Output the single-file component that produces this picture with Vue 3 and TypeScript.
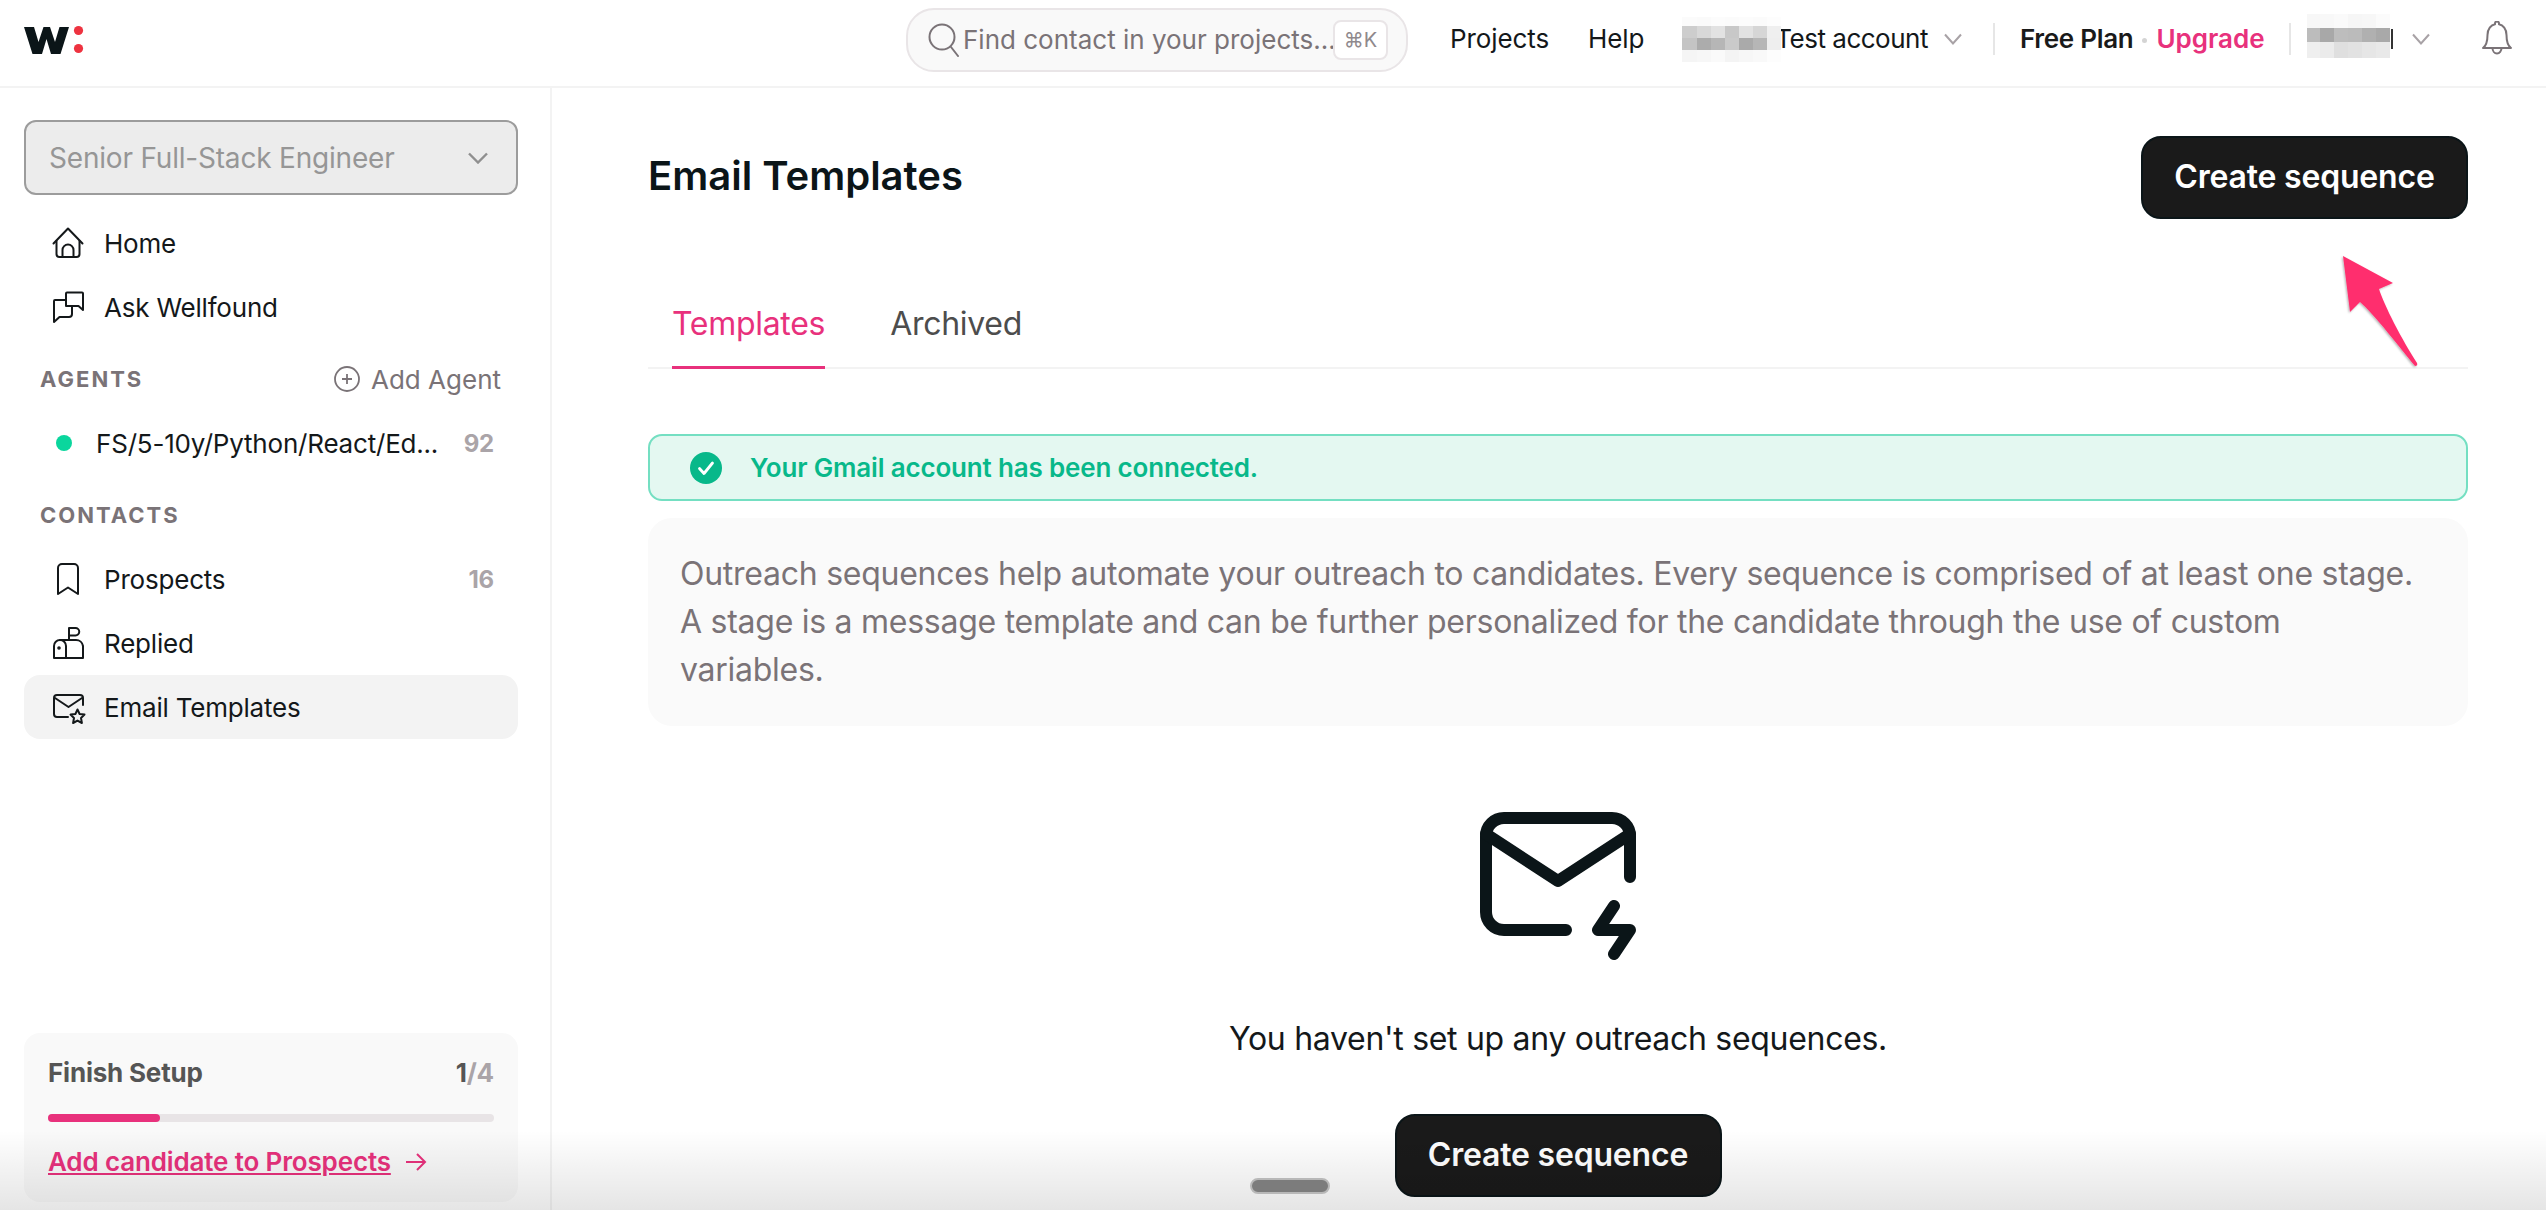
<script setup lang="ts">
// 打码区域的色块
const blurA: string[] = [
  '#fbfbfb', '#fafafa', '#fcfcfc', '#fbfbfb', '#fcfcfc', '#fbfbfb', '#fdfdfd',
  '#cdcdcd', '#d8d8d8', '#e2e2e2', '#c8c8c8', '#e2e2e2', '#d6d6d6', '#efefef',
  '#c4c4c4', '#acacac', '#b6b6b6', '#cacaca', '#aaaaaa', '#b6b6b6', '#eeeeee',
  '#f5f5f5', '#f7f7f7', '#fafafa', '#f4f4f4', '#f7f7f7', '#f9f9f9', '#fdfdfd'
]
const blurB: string[] = [
  '#f7f7f7', '#f8f8f8', '#fafafa', '#f6f6f6', '#f7f7f7', '#fbfbfb',
  '#bcbcbc', '#a8a8a8', '#bdbdbd', '#bbbbbb', '#b0b0b0', '#a9a9a9',
  '#efefef', '#ebebeb', '#dfdfdf', '#e2e2e2', '#e6e6e6', '#e9e9e9'
]
</script>

<template>
  <div class="page">
    <header class="topbar">
      <svg class="logo" width="62" height="30" viewBox="0 0 62 30">
        <polygon points="0,3 10,3 14.5,18 19.5,3 26,3 31,18 35.5,3 45,3 36.5,30 27,30 22.5,15 18,30 8.5,30" fill="#0b1518" />
        <circle cx="54.5" cy="6.5" r="4.6" fill="#ee3340" />
        <circle cx="54.5" cy="24.5" r="4.6" fill="#ee3340" />
      </svg>

      <div class="search">
        <svg width="34" height="34" viewBox="0 0 34 34" fill="none" stroke="#7a7377" stroke-width="2">
          <circle cx="15" cy="14" r="12.5" />
          <path d="M24 24 L31 33" stroke-linecap="round" />
        </svg>
        <span class="search-text">Find contact in your projects...</span>
        <span class="kbd">⌘K</span>
      </div>

      <span class="top-link projects">Projects</span>
      <span class="top-link help">Help</span>

      <div class="account">
        <div class="blur blur-a">
          <i v-for="(c, i) in blurA" :key="i" :style="{ background: c }"></i>
        </div>
        <span class="top-link test">Test account</span>
      </div>
      <svg class="chev" width="18" height="12" viewBox="0 0 18 12" fill="none" stroke="#a8a2a6" stroke-width="2">
        <path d="M1 1.5 L9 10.5 L17 1.5" />
      </svg>

      <span class="divider d1"></span>
      <span class="plan">Free Plan</span>
      <span class="plan-dot"></span>
      <span class="upgrade">Upgrade</span>
      <span class="divider d2"></span>

      <div class="blur blur-b">
        <i v-for="(c, i) in blurB" :key="i" :style="{ background: c }"></i>
      </div>
      <span class="sliver"></span>
      <svg class="chev chev2" width="18" height="12" viewBox="0 0 18 12" fill="none" stroke="#a8a2a6" stroke-width="2">
        <path d="M1 1.5 L9 10.5 L17 1.5" />
      </svg>

      <svg class="bell" width="32" height="36" viewBox="0 0 32 36" fill="none" stroke="#7a7377" stroke-width="2" stroke-linejoin="round">
        <path d="M2 27 C6 24 6.5 20 6.5 14 C6.5 8 10 4 14 3.2 V2.5 a2 2 0 0 1 4 0 V3.2 C22 4 25.5 8 25.5 14 C25.5 20 26 24 30 27 Z" />
        <path d="M11.5 27 a4.5 5.5 0 0 0 9 0" />
      </svg>
    </header>

    <div class="body">
      <aside class="sidebar">
        <div class="select">
          <span>Senior Full-Stack Engineer</span>
          <svg width="20" height="12" viewBox="0 0 20 12" fill="none" stroke="#8f8f8f" stroke-width="2.4">
            <path d="M1 1.5 L10 10.5 L19 1.5" />
          </svg>
        </div>

        <nav class="nav first">
          <div class="nav-row">
            <svg class="ico" viewBox="0 0 32 32">
              <path d="M1.5 16.5 L16 1.5 L30.5 16.5" />
              <path d="M4.5 14 V27 a3 3 0 0 0 3 3 H24.5 a3 3 0 0 0 3 -3 V14" />
              <path d="M10.5 30 V23 a5.5 5.5 0 0 1 11 0 V30" />
            </svg>
            <span>Home</span>
          </div>
          <div class="nav-row">
            <svg class="ico" viewBox="0 0 32 32">
              <path d="M14 9 V2.5 a1 1 0 0 1 1 -1 H30 a1 1 0 0 1 1 1 V19 L26.5 15 H20" />
              <path d="M14 9 H3 a1 1 0 0 0 -1 1 V31 L7.5 26 H17 a3 3 0 0 0 3 -3 V15 H14 V9" />
            </svg>
            <span>Ask Wellfound</span>
          </div>
        </nav>

        <div class="section-head">
          <span class="section-title">AGENTS</span>
          <span class="add-agent">
            <svg width="26" height="26" viewBox="0 0 26 26" fill="none" stroke="#7a7377" stroke-width="1.8">
              <circle cx="13" cy="13" r="12" />
              <path d="M13 8 V18 M8 13 H18" />
            </svg>
            Add Agent
          </span>
        </div>

        <nav class="nav">
          <div class="nav-row agent">
            <span class="dot"></span>
            <span class="agent-name">FS/5-10y/Python/React/Ed...</span>
            <span class="count">92</span>
          </div>
        </nav>

        <div class="section-head">
          <span class="section-title">CONTACTS</span>
        </div>

        <nav class="nav">
          <div class="nav-row">
            <svg class="ico" viewBox="0 0 32 32">
              <path d="M6 31 V5 a4 4 0 0 1 4 -4 H22 a4 4 0 0 1 4 4 V31 L16 24.5 Z" />
            </svg>
            <span>Prospects</span>
            <span class="count">16</span>
          </div>
          <div class="nav-row">
            <svg class="ico" viewBox="0 0 32 32">
              <path d="M2 31 V19 a6 6 0 0 1 6 -6 H24 a7 7 0 0 1 7 6 V31 Z" />
              <path d="M14 31 V19 a6 6 0 0 0 -6 -6" />
              <path d="M17 13 V1 H23.5 a3.5 3.5 0 0 1 0 7.5 H17" />
              <circle cx="7" cy="21" r="0.8" />
            </svg>
            <span>Replied</span>
          </div>
          <div class="nav-row active">
            <svg class="ico ico-star" viewBox="0 0 34 34">
              <path d="M16 25 H5 a3 3 0 0 1 -3 -3 V6 a3 3 0 0 1 3 -3 H28 a3 3 0 0 1 3 3 V13" />
              <path d="M3 6 L16.5 15 L30 6" />
              <path d="M25.5 17.5 L27.6 22 L32.5 22.6 L29 26 L29.9 31 L25.5 28.6 L21.1 31 L22 26 L18.5 22.6 L23.4 22 Z" />
            </svg>
            <span>Email Templates</span>
          </div>
        </nav>

        <div class="setup">
          <div class="setup-head">
            <span>Finish Setup</span>
            <span>1<em>/4</em></span>
          </div>
          <div class="progress"><div class="progress-fill"></div></div>
          <div class="setup-link">
            <a>Add candidate to Prospects</a>
            <svg width="22" height="20" viewBox="0 0 22 20" fill="none" stroke="#e8317c" stroke-width="2">
              <path d="M1 10 H20 M12 2 L20 10 L12 18" />
            </svg>
          </div>
        </div>
      </aside>

      <main class="main">
        <div class="title-row">
          <h1>Email Templates</h1>
          <button class="btn">Create sequence</button>
        </div>

        <div class="tabs">
          <span class="tab selected">Templates</span>
          <span class="tab">Archived</span>
        </div>

        <div class="alert">
          <svg width="32" height="32" viewBox="0 0 32 32">
            <circle cx="16" cy="16" r="16" fill="#08b88a" />
            <path d="M9.5 16.5 L14 21.5 L22.5 11" fill="none" stroke="#fff" stroke-width="2.8" stroke-linecap="round" stroke-linejoin="round" />
          </svg>
          <span>Your Gmail account has been connected.</span>
        </div>

        <div class="intro">
          Outreach sequences help automate your outreach to candidates. Every sequence is comprised of at least one stage.<br />
          A stage is a message template and can be further personalized for the candidate through the use of custom<br />
          variables.
        </div>

        <div class="empty">
          <svg width="168" height="156" viewBox="0 0 168 156" fill="none" stroke="#0b1518" stroke-width="12" stroke-linecap="round" stroke-linejoin="round">
            <path d="M92 124 H30 a18 18 0 0 1 -18 -18 V30 a18 18 0 0 1 18 -18 H138 a18 18 0 0 1 18 18 V71" />
            <path d="M12 28 L84 75 L156 28" />
            <path d="M140 100 L124 124 H156 L140 148" />
          </svg>
          <p>You haven't set up any outreach sequences.</p>
          <button class="btn">Create sequence</button>
        </div>
      </main>
    </div>

    <!-- 红色标注箭头 -->
    <svg class="arrow" width="100" height="130" viewBox="0 0 100 130">
      <defs>
        <filter id="arrow-shadow" x="-20%" y="-20%" width="140%" height="140%">
          <feDropShadow dx="-1" dy="1" stdDeviation="1" flood-color="#000" flood-opacity="0.3" />
        </filter>
      </defs>
      <path
        d="M3 6 L53 33 L39 39 C44 55 62 90 77 113 Q78 116 75 116 C60 98 35 65 20 52 L10 62 Z"
        fill="#ff2f6e"
        filter="url(#arrow-shadow)"
      />
    </svg>

    <div class="fade"></div>
    <div class="pill"></div>
  </div>
</template>

<style>
html,
body {
  margin: 0;
  background: #fff;
}
</style>

<style scoped>
.page {
  position: relative;
  width: 2546px;
  height: 1210px;
  overflow: hidden;
  background: #fff;
  font-family: Inter, "Liberation Sans", sans-serif;
  font-size: 26px;
  color: #14181a;
  display: flex;
  flex-direction: column;
}

/* 顶栏 */
.topbar {
  height: 86px;
  flex: none;
  border-bottom: 2px solid #f3f3f3;
  display: flex;
  align-items: center;
  padding-left: 24px;
}

.logo {
  flex: none;
  margin-top: -9px;
}

.search {
  margin-left: 820px;
  width: 502px;
  height: 64px;
  box-sizing: border-box;
  margin-top: -6px;
  border: 2px solid #e9e5e7;
  border-radius: 28px;
  background: #f9f9f9;
  display: flex;
  align-items: center;
  padding-left: 19px;
  color: #7a7377;
}

.search-text {
  margin-left: 2px;
  white-space: nowrap;
  width: 368px;
  margin-top: -2px;
}

.kbd {
  margin-left: 2px;
  width: 55px;
  height: 40px;
  box-sizing: border-box;
  border: 2px solid #e9e5e7;
  border-radius: 8px;
  background: #fff;
  display: flex;
  align-items: center;
  justify-content: center;
  font-size: 20px;
  color: #8f898d;
}

.top-link {
  white-space: nowrap;
  margin-top: -10px;
  letter-spacing: -0.1px;
}

.projects {
  margin-left: 42px;
}

.help {
  margin-left: 39px;
}

.account {
  margin-left: 38px;
  display: flex;
  align-items: center;
  position: relative;
}

.blur {
  display: grid;
  flex: none;
  position: relative;
  z-index: 1;
}

.blur i {
  display: block;
}

.blur-a {
  width: 99px;
  height: 45px;
  margin-top: -8px;
  grid-template-columns: repeat(7, 1fr);
  grid-template-rows: 9px 12px 12px 12px;
}

.test {
  margin-left: -6px;
  letter-spacing: -0.5px;
}

.chev {
  flex: none;
  margin-top: -8px;
  margin-left: 16px;
}

.divider {
  width: 2px;
  height: 32px;
  background: #e6e6e6;
  flex: none;
  margin-top: -8px;
}

.d1 {
  margin-left: 31px;
}

.plan {
  margin-left: 25px;
  font-weight: 600;
  color: #1a1a1a;
  margin-top: -10px;
  letter-spacing: -0.3px;
}

.plan-dot {
  width: 5px;
  height: 5px;
  border-radius: 50%;
  background: #d4d4d4;
  margin-left: 9px;
  margin-top: -6px;
  flex: none;
}

.upgrade {
  margin-left: 9px;
  font-weight: 600;
  color: #e8317c;
  margin-top: -10px;
}

.d2 {
  margin-left: 24px;
}

.blur-b {
  margin-left: 16px;
  width: 83px;
  height: 44px;
  margin-top: -14px;
  grid-template-columns: repeat(6, 1fr);
  grid-template-rows: 14px 14px 16px;
}

.sliver {
  width: 2px;
  height: 20px;
  background: #333;
  margin-left: 1px;
  margin-top: -8px;
  flex: none;
}

.chev2 {
  margin-left: 19px;
}

.bell {
  margin-left: 51px;
  margin-top: -8px;
  flex: none;
}

.body {
  flex: 1;
  display: flex;
  min-height: 0;
}

/* 侧边栏 */
.sidebar {
  width: 552px;
  flex: none;
  box-sizing: border-box;
  border-right: 2px solid #f3f3f3;
  padding: 32px 32px 8px 24px;
  display: flex;
  flex-direction: column;
}

.select {
  height: 75px;
  width: 494px;
  box-sizing: border-box;
  border: 2px solid #9c9c9c;
  border-radius: 12px;
  background: #ececec;
  color: #969696;
  font-size: 28px;
  letter-spacing: -0.2px;
  display: flex;
  align-items: center;
  justify-content: space-between;
  padding: 0 28px 0 23px;
}

.nav {
  margin-top: 8px;
}

.nav.first {
  margin-top: 16px;
}

.nav-row {
  height: 64px;
  width: 494px;
  box-sizing: border-box;
  padding: 0 24px 0 28px;
  display: flex;
  align-items: center;
  gap: 20px;
  border-radius: 16px;
  letter-spacing: -0.2px;
}

.nav-row.active {
  background: #f3f3f3;
}

.ico {
  width: 32px;
  height: 32px;
  flex: none;
  fill: none;
  stroke: #14181a;
  stroke-width: 2;
  stroke-linejoin: round;
  stroke-linecap: round;
}

.ico-star {
  width: 34px;
  height: 34px;
  margin-right: -2px;
  margin-top: 4px;
}

.count {
  margin-left: auto;
  font-size: 24px;
  font-weight: 700;
  color: #aaa4a8;
}

.section-head {
  height: 48px;
  margin-top: 16px;
  width: 494px;
  box-sizing: border-box;
  padding: 0 17px 0 16px;
  display: flex;
  align-items: center;
  justify-content: space-between;
}

.section-title {
  font-size: 22px;
  font-weight: 700;
  letter-spacing: 2px;
  color: #7a7377;
}

.add-agent {
  display: flex;
  align-items: center;
  gap: 11px;
  color: #7a7377;
}

.agent {
  padding-left: 32px;
  gap: 0;
}

.dot {
  width: 16px;
  height: 16px;
  border-radius: 50%;
  background: #0ad69d;
  flex: none;
}

.agent-name {
  margin-left: 24px;
  white-space: nowrap;
}

.setup {
  margin-top: auto;
  width: 494px;
  height: 169px;
  box-sizing: border-box;
  border-radius: 16px;
  background: #f9f9f9;
  padding: 24px;
}

.setup-head {
  display: flex;
  justify-content: space-between;
  font-weight: 700;
  color: #555;
  line-height: 32px;
  letter-spacing: -0.2px;
}

.setup-head em {
  font-style: normal;
  color: #aaa4a8;
}

.progress {
  margin-top: 25px;
  height: 8px;
  border-radius: 4px;
  background: #e8e4e6;
}

.progress-fill {
  width: 112px;
  height: 8px;
  border-radius: 4px;
  background: #e8317c;
}

.setup-link {
  margin-top: 24px;
  display: flex;
  align-items: center;
  gap: 14px;
  color: #e8317c;
  font-weight: 600;
  letter-spacing: -0.15px;
}

.setup-link a {
  text-decoration: underline;
  white-space: nowrap;
}

/* 主内容 */
.main {
  flex: 1;
  min-width: 0;
  padding: 48px 78px 0 96px;
}

.title-row {
  display: flex;
  align-items: center;
  justify-content: space-between;
}

h1 {
  margin: 0 0 4px;
  font-size: 40px;
  font-weight: 600;
  color: #0b1518;
}

.btn {
  width: 327px;
  height: 83px;
  border: 2px solid #0b1518;
  border-radius: 20px;
  background: #1a1a1a;
  color: #fff;
  font-family: inherit;
  font-size: 32px;
  font-weight: 600;
  letter-spacing: -0.2px;
  padding: 0 0 2px;
}

.tabs {
  margin-top: 70px;
  height: 80px;
  box-sizing: border-box;
  border-bottom: 2px solid #f3f3f3;
  display: flex;
  gap: 65px;
  padding-left: 24px;
}

.tab {
  height: 80px;
  box-sizing: border-box;
  line-height: 70px;
  font-size: 32px;
  letter-spacing: -0.3px;
  color: #4d4d4d;
}

.tab.selected {
  color: #e8317c;
  border-bottom: 3px solid #e8317c;
}

.alert {
  margin-top: 65px;
  height: 67px;
  box-sizing: border-box;
  border: 2px solid #74dfc2;
  border-radius: 14px;
  background: #e4f8f1;
  display: flex;
  align-items: center;
  gap: 28px;
  padding-left: 40px;
  color: #08b88a;
  font-weight: 600;
  letter-spacing: -0.17px;
}

.intro {
  margin-top: 17px;
  padding: 32px;
  border-radius: 24px;
  background: #fafafa;
  color: #7a7377;
  font-size: 32px;
  letter-spacing: -0.26px;
  line-height: 48px;
}

.empty {
  display: flex;
  flex-direction: column;
  align-items: center;
  margin-top: 80px;
}

.empty p {
  margin: 53px 0 0;
  font-size: 32px;
  letter-spacing: -0.3px;
  line-height: 48px;
  color: #14181a;
}

.empty .btn {
  margin-top: 51px;
}

/* 覆盖层 */
.arrow {
  position: absolute;
  left: 2340px;
  top: 250px;
}

.fade {
  position: absolute;
  left: 0;
  right: 0;
  bottom: 0;
  height: 80px;
  background: linear-gradient(rgba(0, 0, 0, 0), rgba(0, 0, 0, 0.1));
  pointer-events: none;
}

.pill {
  position: absolute;
  left: 1250px;
  top: 1178px;
  width: 80px;
  height: 16px;
  box-sizing: border-box;
  border: 2px solid #b8b8b8;
  border-radius: 8px;
  background: #7c7c7c;
}
</style>
